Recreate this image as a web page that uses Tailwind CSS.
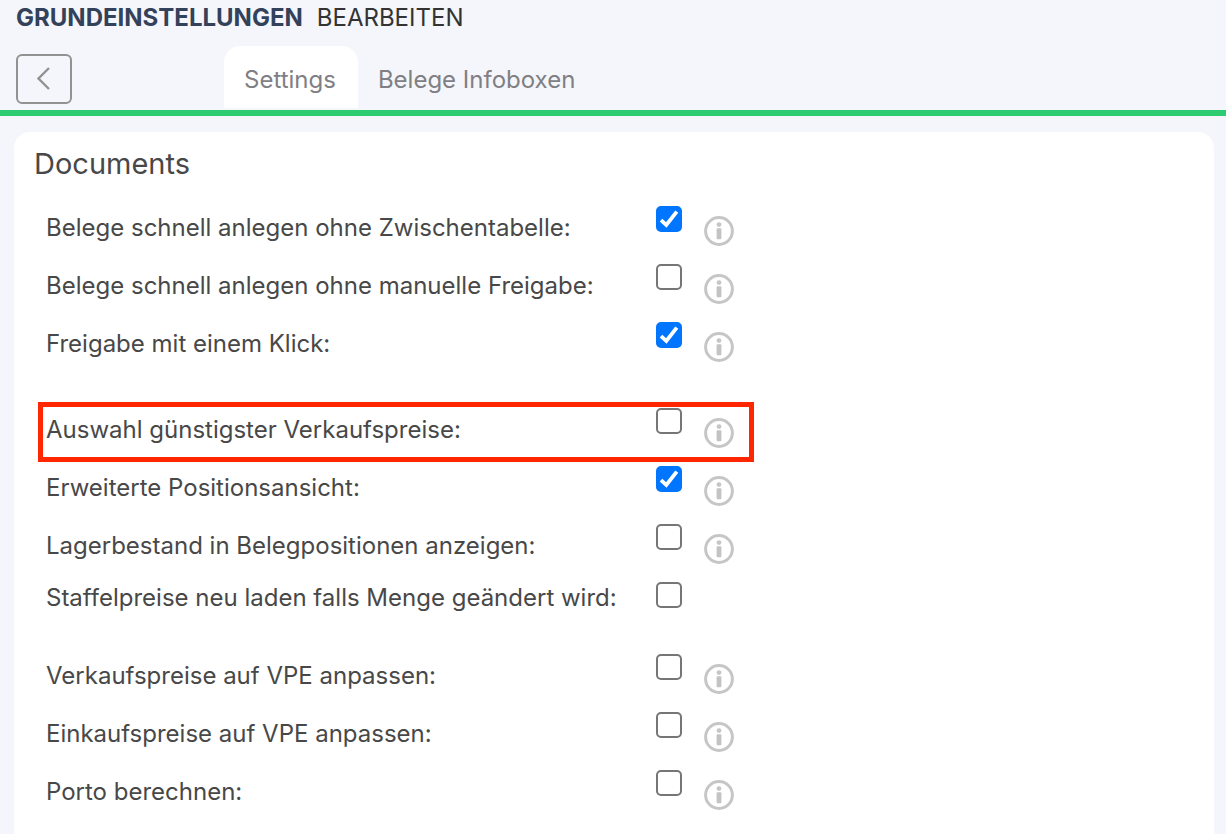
<!DOCTYPE html>
<html lang="de">
<head>
  <meta charset="UTF-8">
  <meta name="viewport" content="width=device-width, initial-scale=1.0">
  <title>Grundeinstellungen</title>
  <script src="https://cdn.jsdelivr.net/npm/@tailwindcss/browser@4"></script>
</head>
<body class="bg-[#f5f6fb] text-[#484848] font-['Inter',sans-serif] text-2xl h-screen overflow-hidden flex flex-col">

<!-- Icons -->
<svg class="hidden">
  <symbol id="info" viewBox="0 0 30 30">
    <circle cx="15" cy="15" r="13.4" fill="#fff" stroke="#c6c6c6" stroke-width="3"/>
    <circle cx="15" cy="8.6" r="2.4" fill="#c6c6c6"/>
    <rect x="12.6" y="12.2" width="4.8" height="11" rx="1" fill="#c3c3c3"/>
  </symbol>
  <symbol id="check" viewBox="0 0 26 26">
    <path d="M5 14.2 10.3 19 20.8 5.6" fill="none" stroke="#fff" stroke-width="3.8"/>
  </symbol>
</svg>

<!-- Header -->
<header class="border-b-6 border-[#2ecc71] shrink-0">
  <h1 class="flex gap-3.5 px-4 pt-0.5 leading-8">
    <span class="font-bold text-[#34415a]">GRUNDEINSTELLUNGEN</span>
    <span class="text-[#333333]">BEARBEITEN</span>
  </h1>
  <div class="flex items-end pl-4 pt-3 pb-0.5">
    <button type="button" aria-label="Zurück" class="w-14 h-[50px] mb-1 border-2 border-[#929292] rounded-md flex items-center justify-center">
      <svg class="w-6 h-6" viewBox="0 0 24 24" fill="none" stroke="#929292" stroke-width="2.4">
        <path d="M17 1 6.5 11.5 17 22"/>
      </svg>
    </button>
    <nav class="flex ml-38 leading-[68px] h-[62px] text-[#7f7f84]">
      <a href="#settings" class="bg-white rounded-t-2xl pl-5 pr-[22px]">Settings</a>
      <a href="#infoboxen" class="px-5">Belege Infoboxen</a>
    </nav>
  </div>
</header>

<!-- Einstellungen -->
<main class="flex-1 bg-white rounded-t-2xl mt-4 ml-3.5 mr-3 pl-5 pt-3">
  <h2 class="text-[29px] leading-10 mb-[22px]">Documents</h2>
  <form class="pl-3 w-[700px]">
    <div class="h-[58px] flex items-start">
      <label for="schnell" class="w-[610px] leading-11">Belege schnell anlegen ohne Zwischentabelle:</label>
      <div class="relative w-[26px] h-[26px] mr-[22px]">
        <input type="checkbox" id="schnell" class="peer block w-full h-full appearance-none bg-white border-2 border-[#767676] rounded-[5px] checked:bg-[#0075ff] checked:border-[#0075ff]" checked>
        <svg class="absolute inset-0 w-full h-full hidden peer-checked:block pointer-events-none"><use href="#check"/></svg>
      </div>
      <svg class="w-[30px] h-[30px] mt-2.5"><use href="#info"/></svg>
    </div>
    <div class="h-[58px] flex items-start">
      <label for="freigabe" class="w-[610px] leading-11">Belege schnell anlegen ohne manuelle Freigabe:</label>
      <div class="relative w-[26px] h-[26px] mr-[22px]">
        <input type="checkbox" id="freigabe" class="peer block w-full h-full appearance-none bg-white border-2 border-[#767676] rounded-[5px] checked:bg-[#0075ff] checked:border-[#0075ff]">
        <svg class="absolute inset-0 w-full h-full hidden peer-checked:block pointer-events-none"><use href="#check"/></svg>
      </div>
      <svg class="w-[30px] h-[30px] mt-2.5"><use href="#info"/></svg>
    </div>
    <div class="h-[58px] flex items-start">
      <label for="klick" class="w-[610px] leading-11">Freigabe mit einem Klick:</label>
      <div class="relative w-[26px] h-[26px] mr-[22px]">
        <input type="checkbox" id="klick" class="peer block w-full h-full appearance-none bg-white border-2 border-[#767676] rounded-[5px] checked:bg-[#0075ff] checked:border-[#0075ff]" checked>
        <svg class="absolute inset-0 w-full h-full hidden peer-checked:block pointer-events-none"><use href="#check"/></svg>
      </div>
      <svg class="w-[30px] h-[30px] mt-2.5"><use href="#info"/></svg>
    </div>

    <div class="h-[58px] flex items-start relative mt-7">
      <label for="vkpreise" class="w-[610px] leading-11">Auswahl günstigster Verkaufspreise:</label>
      <div class="relative w-[26px] h-[26px] mr-[22px]">
        <input type="checkbox" id="vkpreise" class="peer block w-full h-full appearance-none bg-white border-2 border-[#767676] rounded-[5px] checked:bg-[#0075ff] checked:border-[#0075ff]">
        <svg class="absolute inset-0 w-full h-full hidden peer-checked:block pointer-events-none"><use href="#check"/></svg>
      </div>
      <svg class="w-[30px] h-[30px] mt-2.5"><use href="#info"/></svg>
      <!-- Markierung -->
      <div class="absolute -top-1.5 -left-2 -right-5 h-[60px] border-5 border-[#ff2600] pointer-events-none"></div>
    </div>
    <div class="h-[58px] flex items-start">
      <label for="position" class="w-[610px] leading-11">Erweiterte Positionsansicht:</label>
      <div class="relative w-[26px] h-[26px] mr-[22px]">
        <input type="checkbox" id="position" class="peer block w-full h-full appearance-none bg-white border-2 border-[#767676] rounded-[5px] checked:bg-[#0075ff] checked:border-[#0075ff]" checked>
        <svg class="absolute inset-0 w-full h-full hidden peer-checked:block pointer-events-none"><use href="#check"/></svg>
      </div>
      <svg class="w-[30px] h-[30px] mt-2.5"><use href="#info"/></svg>
    </div>
    <div class="h-[58px] flex items-start">
      <label for="lager" class="w-[610px] leading-11">Lagerbestand in Belegpositionen anzeigen:</label>
      <div class="relative w-[26px] h-[26px] mr-[22px]">
        <input type="checkbox" id="lager" class="peer block w-full h-full appearance-none bg-white border-2 border-[#767676] rounded-[5px] checked:bg-[#0075ff] checked:border-[#0075ff]">
        <svg class="absolute inset-0 w-full h-full hidden peer-checked:block pointer-events-none"><use href="#check"/></svg>
      </div>
      <svg class="w-[30px] h-[30px] mt-2.5"><use href="#info"/></svg>
    </div>
    <div class="h-11 flex items-start">
      <label for="staffel" class="w-[610px] leading-8">Staffelpreise neu laden falls Menge geändert wird:</label>
      <div class="relative w-[26px] h-[26px] mr-[22px]">
        <input type="checkbox" id="staffel" class="peer block w-full h-full appearance-none bg-white border-2 border-[#767676] rounded-[5px] checked:bg-[#0075ff] checked:border-[#0075ff]">
        <svg class="absolute inset-0 w-full h-full hidden peer-checked:block pointer-events-none"><use href="#check"/></svg>
      </div>
    </div>

    <div class="h-[58px] flex items-start mt-7">
      <label for="vkvpe" class="w-[610px] leading-11">Verkaufspreise auf VPE anpassen:</label>
      <div class="relative w-[26px] h-[26px] mr-[22px]">
        <input type="checkbox" id="vkvpe" class="peer block w-full h-full appearance-none bg-white border-2 border-[#767676] rounded-[5px] checked:bg-[#0075ff] checked:border-[#0075ff]">
        <svg class="absolute inset-0 w-full h-full hidden peer-checked:block pointer-events-none"><use href="#check"/></svg>
      </div>
      <svg class="w-[30px] h-[30px] mt-2.5"><use href="#info"/></svg>
    </div>
    <div class="h-[58px] flex items-start">
      <label for="ekvpe" class="w-[610px] leading-11">Einkaufspreise auf VPE anpassen:</label>
      <div class="relative w-[26px] h-[26px] mr-[22px]">
        <input type="checkbox" id="ekvpe" class="peer block w-full h-full appearance-none bg-white border-2 border-[#767676] rounded-[5px] checked:bg-[#0075ff] checked:border-[#0075ff]">
        <svg class="absolute inset-0 w-full h-full hidden peer-checked:block pointer-events-none"><use href="#check"/></svg>
      </div>
      <svg class="w-[30px] h-[30px] mt-2.5"><use href="#info"/></svg>
    </div>
    <div class="h-[58px] flex items-start">
      <label for="porto" class="w-[610px] leading-11">Porto berechnen:</label>
      <div class="relative w-[26px] h-[26px] mr-[22px]">
        <input type="checkbox" id="porto" class="peer block w-full h-full appearance-none bg-white border-2 border-[#767676] rounded-[5px] checked:bg-[#0075ff] checked:border-[#0075ff]">
        <svg class="absolute inset-0 w-full h-full hidden peer-checked:block pointer-events-none"><use href="#check"/></svg>
      </div>
      <svg class="w-[30px] h-[30px] mt-2.5"><use href="#info"/></svg>
    </div>
  </form>
</main>

</body>
</html>
